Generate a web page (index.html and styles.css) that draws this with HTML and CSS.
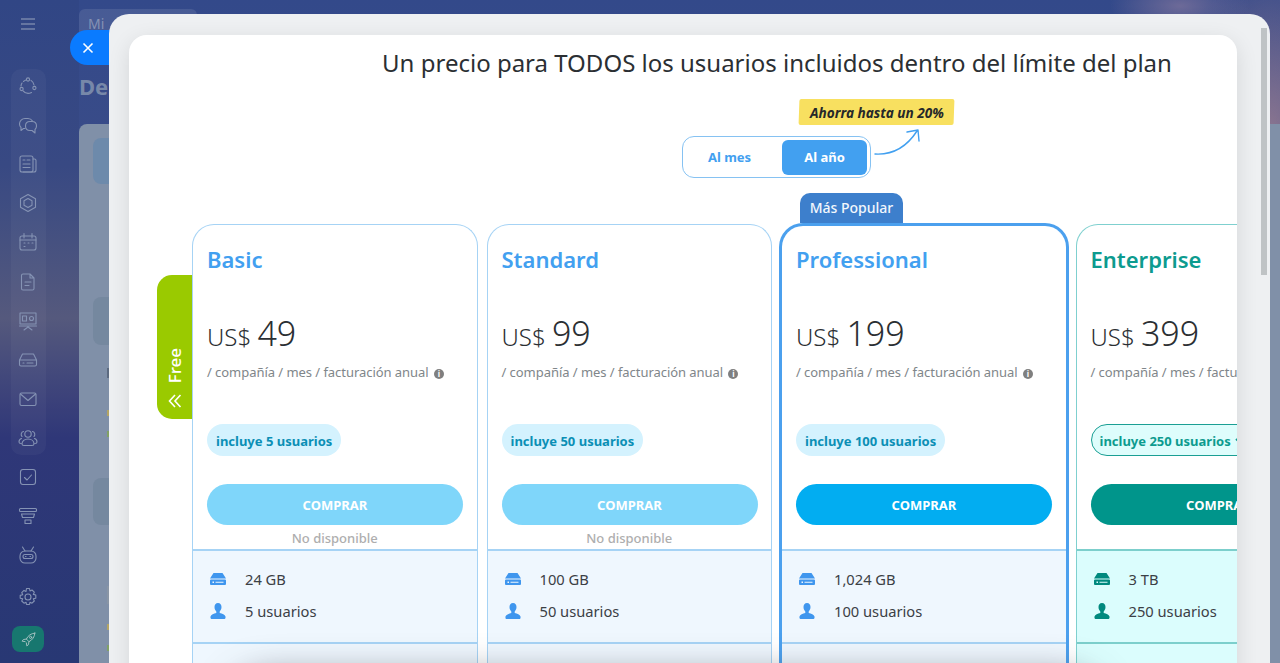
FILE: index.html
```html
<!DOCTYPE html>
<html lang="es">
<head>
<meta charset="utf-8">
<title>Planes</title>
<link rel="stylesheet" href="styles.css">
</head>
<body>
<svg class="defs" width="0" height="0" aria-hidden="true">
  <symbol id="drive" viewBox="0 0 16 12"><path d="M3.500 0h9L16 5.500H0zM1 6.500h14a1 1 0 0 1 1 1V11a1 1 0 0 1-1 1H1a1 1 0 0 1-1-1V7.500a1 1 0 0 1 1-1zM2.500 8.500v1.500h1.500V8.500zm3 .2v1h8v-1z" fill-rule="evenodd"/></symbol>
  <symbol id="user" viewBox="0 0 16 16"><path d="M8 0c2.300 0 3.500 1.700 3.500 4 0 2-.8 3.500-1.800 4.400v1.600c2.500.7 5.300 1.600 5.800 3.500.2.800 0 2.500-1 2.500H1.500c-1 0-1.200-1.700-1-2.500.5-1.900 3.300-2.800 5.800-3.500V8.400C5.300 7.500 4.500 6 4.500 4 4.500 1.700 5.700 0 8 0z"/></symbol>
</svg>
<aside class="sidebar">
  <button class="burger"><svg width="16" height="12" viewBox="0 0 16 12"><path d="M1 1h14M1 6h14M1 11h14"/></svg></button>
  <div class="side-group">
    <span class="side-icon"><svg viewBox="0 0 20 20"><circle cx="10" cy="3.500" r="1.600"/><circle cx="3.600" cy="13" r="1.600"/><circle cx="16.400" cy="12" r="1.600"/><path d="M5.500 5.500A7.500 7.500 0 0 1 8 4M13 4.400a7 7 0 0 1 3 4.600M5 14.800a7 7 0 0 0 8.500 1.700M3 10a7 7 0 0 1 1-3"/></svg></span>
    <span class="side-icon"><svg viewBox="0 0 20 20"><path d="M7 13.500H5.500L3 15.500v-3A5 5 0 0 1 1.500 9c0-3 2.500-5.500 5.500-5.500h3c2 0 3.500 1 4.500 2.500"/><path d="M12 6.500h2c2.700 0 4.500 2 4.500 4.500 0 1.500-.5 2.500-1.500 3.500V18l-3-2.500h-2c-2.700 0-4.500-2-4.500-4.500s1.800-4.500 4.500-4.500z"/></svg></span>
    <span class="side-icon"><svg viewBox="0 0 20 20"><rect x="2" y="2" width="13" height="16" rx="2"/><path d="M15 5h1.500A1.500 1.500 0 0 1 18 6.500V16a2 2 0 0 1-2 2H5M5 6h2M9 6h3M5 10h7M5 13.500h7"/></svg></span>
    <span class="side-icon"><svg viewBox="0 0 20 20"><path d="M10 1.500l7.500 4.300v8.400L10 18.500l-7.500-4.300V5.800z"/><path d="M10 5.500l4 2.300v4.400l-4 2.300-4-2.300V7.800z"/></svg></span>
    <span class="side-icon"><svg viewBox="0 0 20 20"><rect x="2" y="4" width="16" height="14" rx="2"/><path d="M6 1.500V6M14 1.500V6M2 8h16M6 11h1M10 11h1M14 11h1M6 14.500h1"/></svg></span>
    <span class="side-icon"><svg viewBox="0 0 20 20"><path d="M5 2h7l4 4v10.500a1.500 1.500 0 0 1-1.500 1.500h-9.500a1.500 1.500 0 0 1-1.500-1.500V3.500A1.500 1.500 0 0 1 5 2zM12 2v4h4M7 10h6M7 13.500h4"/></svg></span>
    <span class="side-icon"><svg viewBox="0 0 20 20"><path d="M2 2h16v11H2zM1.500 15h17M10 15v1M6 19l4-3 4 3"/><rect x="4.500" y="5" width="4" height="5"/><circle cx="13.500" cy="7.500" r="2"/></svg></span>
    <span class="side-icon"><svg viewBox="0 0 20 20"><path d="M4.500 4h11l3 6v4.500a1.500 1.500 0 0 1-1.500 1.500H3a1.500 1.500 0 0 1-1.500-1.500V10zM1.500 10h17M5 13h1M9 13h6"/></svg></span>
    <span class="side-icon"><svg viewBox="0 0 20 20"><rect x="2" y="4" width="16" height="12.500" rx="1.500"/><path d="M2.500 5l7.500 6.500L17.500 5"/></svg></span>
    <span class="side-icon"><svg viewBox="0 0 20 20"><circle cx="10" cy="6" r="3.200"/><path d="M4 16c0-3 2.500-5 6-5s6 2 6 5c0 1-1 1.500-2 1.500H6c-1 0-2-.5-2-1.500zM5.500 3.500a3 3 0 0 0-1.500 5M14.500 3.500a3 3 0 0 1 1.500 5M3 15.500c-1.500 0-2-.5-2-1.500 0-1.500 1-3 2.500-3.500M17 15.500c1.500 0 2-.5 2-1.500 0-1.500-1-3-2.500-3.500"/></svg></span>
  </div>
  <span class="side-icon"><svg viewBox="0 0 20 20"><rect x="2.500" y="2.500" width="15" height="15" rx="2.500"/><path d="M6.500 10.500l2.500 2.500 4.500-5"/></svg></span>
  <span class="side-icon"><svg viewBox="0 0 20 20"><rect x="1.500" y="2.500" width="17" height="3" rx="1"/><path d="M3.500 8h13l-1 3.500h-11zM7 14h6v3.500H7z"/></svg></span>
  <span class="side-icon"><svg viewBox="0 0 20 20"><rect x="2" y="6" width="16" height="12" rx="5"/><path d="M4.500 2l2.500 4M15.500 2L13 6"/><rect x="5" y="9.500" width="10" height="4" rx="2"/><path d="M7.500 11.500h.5M12 11.500h.5"/></svg></span>
  <span class="side-icon gear"><svg viewBox="0 0 20 20"><circle cx="10" cy="10" r="3"/><path d="M8.500 1.500h3l.5 2.500 2-1 2.300 2.200-1 2.200 2.500.6v3.200l-2.500.6 1 2.200-2.300 2.200-2-1-.5 2.300h-3l-.5-2.300-2 1-2.300-2.200 1-2.200-2.500-.6V8.400l2.500-.6-1-2.200L6 3.400l2 1z"/></svg></span>
  <span class="rocket"><svg viewBox="0 0 20 20"><path d="M17.500 2.500c-4.500.3-8 2.800-10 7l3 3c4.200-2 6.700-5.500 7-10zM7.500 9.500l-3.500.5-1.500 2 3.500.5M10.500 12.500l-.5 3.500-2 1.500-.5-3.500"/><circle cx="12.500" cy="7.500" r="1.300"/></svg></span>
</aside>

<main class="backdrop">
  <div class="crumb">Mi</div>
  <h1 class="page-title">Descripción</h1>
  <section class="board">
    <div class="tile"></div>
    <div class="tile tile-b"></div>
    <div class="tile tile-c"></div>
    <i class="mark m1"></i><i class="mark m2"></i><i class="mark m3"></i><i class="mark m4"></i><i class="mark m5"></i><i class="mark m6"></i>
  </section>
</main>

<button class="close" aria-label="Cerrar"><svg width="12" height="12" viewBox="0 0 12 12"><path d="M1.500 1.500l9 9M10.500 1.500l-9 9"/></svg></button>

<div class="slider">
  <div class="scrollbar"></div>
  <div class="sheet">
    <div class="pricing">
      <h2 class="headline">Un precio para TODOS los usuarios incluidos dentro del límite del plan</h2>
      <div class="period">
        <div class="toggle">
          <span class="toggle-opt">Al mes</span>
          <span class="toggle-opt is-on">Al año</span>
          <div class="promo"><span class="promo-label">Ahorra hasta un 20%</span></div>
          <svg class="promo-arrow" width="50" height="32" viewBox="0 0 50 32"><path d="M1 27c17 1 31-6 42-23M33 5l11-2 1 11"/></svg>
        </div>
      </div>
      <div class="cards">
        <a class="free-tab"><span class="free-label">Free</span><svg width="14" height="14" viewBox="0 0 14 14"><path d="M7 1L1.500 7 7 13M12.500 1L7 7l5.500 6"/></svg></a>

        <article class="card">
          <h3 class="plan">Basic</h3>
          <p class="price"><span class="cur">US$ </span>49</p>
          <p class="terms">/ compañía / mes / facturación anual <span class="info">i</span></p>
          <span class="seats">incluye 5 usuarios</span>
          <button class="buy">COMPRAR</button>
          <p class="note">No disponible</p>
          <div class="feat">
            <div class="feat-row"><svg class="ic"><use href="#drive"/></svg>24 GB</div>
            <div class="feat-row"><svg class="ic"><use href="#user"/></svg>5 usuarios</div>
          </div>
          <div class="feat feat-more"></div>
        </article>

        <article class="card">
          <h3 class="plan">Standard</h3>
          <p class="price"><span class="cur">US$ </span>99</p>
          <p class="terms">/ compañía / mes / facturación anual <span class="info">i</span></p>
          <span class="seats">incluye 50 usuarios</span>
          <button class="buy">COMPRAR</button>
          <p class="note">No disponible</p>
          <div class="feat">
            <div class="feat-row"><svg class="ic"><use href="#drive"/></svg>100 GB</div>
            <div class="feat-row"><svg class="ic"><use href="#user"/></svg>50 usuarios</div>
          </div>
          <div class="feat feat-more"></div>
        </article>

        <article class="card card-pro">
          <span class="pop">Más Popular</span>
          <h3 class="plan">Professional</h3>
          <p class="price"><span class="cur">US$ </span>199</p>
          <p class="terms">/ compañía / mes / facturación anual <span class="info">i</span></p>
          <span class="seats">incluye 100 usuarios</span>
          <button class="buy">COMPRAR</button>
          <p class="note"></p>
          <div class="feat">
            <div class="feat-row"><svg class="ic"><use href="#drive"/></svg>1,024 GB</div>
            <div class="feat-row"><svg class="ic"><use href="#user"/></svg>100 usuarios</div>
          </div>
          <div class="feat feat-more"></div>
        </article>

        <article class="card card-ent">
          <h3 class="plan">Enterprise</h3>
          <p class="price"><span class="cur">US$ </span>399</p>
          <p class="terms">/ compañía / mes / facturación anual <span class="info">i</span></p>
          <span class="seats">incluye 250 usuarios <svg class="chev" width="10" height="7" viewBox="0 0 10 7"><path d="M1 1l4 4 4-4"/></svg></span>
          <button class="buy">COMPRAR</button>
          <p class="note"></p>
          <div class="feat">
            <div class="feat-row"><svg class="ic"><use href="#drive"/></svg>3 TB</div>
            <div class="feat-row"><svg class="ic"><use href="#user"/></svg>250 usuarios</div>
          </div>
          <div class="feat feat-more"></div>
        </article>
      </div>
    </div>
    <div class="sheet-fade"></div>
  </div>
</div>
</body>
</html>
```

FILE: styles.css
```css
* { box-sizing: border-box; }
html, body { height: 100%; }
body {
  margin: 0;
  height: 663px;
  overflow: hidden;
  display: flex;
  font-family: "Noto Sans", "Open Sans", sans-serif;
  color: #2b2f33;
  background:
    radial-gradient(ellipse 70px 30px at 1180px 6px, #6d6a98 0%, rgba(109,106,152,0) 100%),
    radial-gradient(ellipse 90px 170px at 1270px 130px, #8a7590 0%, rgba(138,117,144,0) 100%),
    radial-gradient(ellipse 40px 110px at 1280px 340px, #806a88 0%, rgba(128,106,136,0) 100%),
    radial-gradient(ellipse 20px 50px at 1278px 480px, #7a8aa8 0%, rgba(122,138,168,0) 100%),
    linear-gradient(180deg, #33498a 0%, #3a4c88 25%, #585c82 48%, #31397c 66%, #2a3a78 100%);
}
.defs { position: absolute; }
.sidebar {
  width: 79px;
  flex: none;
  display: flex;
  flex-direction: column;
  align-items: center;
  padding-right: 23px;
  background: rgba(0, 0, 0, .03);
}
.burger {
  border: 0;
  background: none;
  padding: 0;
  margin: 18px 0 39px;
  height: 12px;
  display: block;
}
.burger svg { display: block; fill: none; stroke: #7785ab; stroke-width: 1.300; }
.side-group {
  width: 35px;
  height: 386px;
  margin-bottom: 2.500px;
  background: rgba(255, 255, 255, .035);
  border-radius: 10px;
  display: flex;
  flex-direction: column;
  align-items: center;
  justify-content: center;
}
.side-icon {
  width: 39px;
  height: 39.100px;
  display: flex;
  align-items: center;
  justify-content: center;
  flex: none;
}
.side-icon svg, .rocket svg {
  width: 20px;
  height: 20px;
  fill: none;
  stroke: #8593b4;
  stroke-width: 1.100;
  stroke-linejoin: round;
  stroke-linecap: round;
}
.gear { margin-top: 3px; }
.rocket {
  width: 32px;
  height: 26px;
  margin-top: 9.500px;
  border-radius: 8px;
  background: #17776f;
  display: flex;
  align-items: center;
  justify-content: center;
}
.rocket svg { width: 17px; height: 17px; stroke: #a8c3c3; }

.backdrop { flex: 1; min-width: 0; position: relative; }
.crumb {
  width: 118px;
  height: 41px;
  margin-top: 9px;
  padding: 5px 9px;
  border-radius: 6px;
  background: rgba(255, 255, 255, .1);
  color: #8592b4;
  font-size: 14px;
}
.page-title {
  margin: 21px 0 0;
  color: #7788a9;
  font-size: 22px;
  line-height: 30px;
  font-weight: 700;
}
.board {
  position: relative;
  height: 540px;
  margin-top: 23px;
  padding: 14px;
  border-radius: 8px 0 0 0;
  background: #8090a8;
}
.tile { height: 46px; border-radius: 8px; background: #6d8aab; }
.tile-b { margin-top: 113px; height: 48px; background: #75889f; }
.tile-c { margin-top: 133px; height: 47px; background: #75889f; }
.mark { position: absolute; left: 28px; width: 3px; height: 6px; background: #5c6a80; }
.m1 { top: 244px; height: 10px; }
.m2 { top: 286px; background: #b3a464; }
.m3 { top: 307px; background: #80a066; }
.m4 { top: 462px; height: 18px; background: #8995a5; }
.m5 { top: 500px; background: #b3a464; }
.m6 { top: 521px; background: #80a066; }

.close {
  position: absolute;
  left: 70px;
  top: 30px;
  width: 44px;
  height: 35px;
  padding: 0 8px 0 0;
  border: 0;
  border-radius: 18px 0 0 18px;
  background: #0a7bff;
  display: flex;
  align-items: center;
  justify-content: center;
}
.close svg { fill: none; stroke: #fff; stroke-width: 1.600; }

.slider {
  position: absolute;
  left: 109px;
  right: 10px;
  top: 14px;
  bottom: -40px;
  padding: 21px 33px 0 20px;
  border-radius: 20px 20px 0 0;
  background: #eef0f2;
}
.scrollbar {
  position: absolute;
  right: 3px;
  top: 14px;
  width: 6px;
  height: 247px;
  background: #bfc3c5;
}
.sheet {
  position: relative;
  height: 100%;
  border-radius: 18px 18px 0 0;
  background: #fff;
  overflow: hidden;
}
.slider::before {
  content: "";
  position: absolute;
  left: 20px;
  right: 33px;
  top: 21px;
  bottom: 0;
  border-radius: 18px 18px 0 0;
  box-shadow: 0 6px 22px rgba(0, 0, 0, .11);
}
.pricing { width: 1170px; margin-left: 63px; padding-top: 11px; }
.headline {
  margin: 0;
  text-align: center;
  font-size: 24px;
  line-height: 34px;
  font-weight: 400;
  color: #2b2f33;
}
.period { display: flex; justify-content: center; padding-top: 56px; }
.toggle {
  position: relative;
  width: 189px;
  height: 42px;
  left: -1px;
  padding: 2.500px;
  display: flex;
  justify-content: flex-end;
  align-items: stretch;
  border: 1.500px solid #86c2f2;
  border-radius: 12px;
}
.toggle-opt {
  width: 85px;
  display: flex;
  align-items: center;
  justify-content: center;
  font-size: 13px;
  font-weight: 700;
  color: #42a0f0;
  border-radius: 6px;
}
.toggle-opt:first-child { margin-right: 10px; }
.toggle-opt.is-on { background: #42a0f0; color: #fff; }
.promo {
  position: absolute;
  left: 116px;
  top: -38px;
  width: 155px;
  height: 26px;
  background: #f8e060;
  transform: skewX(-2deg);
  border-radius: 2px;
  display: flex;
  align-items: center;
  justify-content: center;
}
.promo-label {
  font-size: 13.600px;
  font-style: italic;
  font-weight: 700;
  color: #26282a;
  transform: skewX(2deg);
}
.promo-arrow {
  position: absolute;
  left: 191px;
  top: -10px;
  fill: none;
  stroke: #42a0f0;
  stroke-width: 1.400;
  stroke-linecap: round;
  stroke-linejoin: round;
}
.cards {
  position: relative;
  display: flex;
  align-items: flex-start;
  gap: 9px;
  margin-top: 46px;
}
.free-tab {
  position: absolute;
  left: -35px;
  top: 51px;
  width: 35px;
  height: 144px;
  border-radius: 15px 0 0 15px;
  background: #9aca00;
  display: flex;
  flex-direction: column;
  align-items: center;
  justify-content: flex-end;
  gap: 11px;
  padding-bottom: 11px;
  color: #fff;
}
.free-label {
  writing-mode: vertical-rl;
  transform: rotate(180deg);
  font-size: 17px;
  font-weight: 500;
  line-height: 18px;
}
.free-tab svg { fill: none; stroke: #fff; stroke-width: 1.600; }
.card {
  position: relative;
  flex: none;
  width: 285.500px;
  height: 520px;
  padding: 0 14px;
  border: 1px solid #a6d3f5;
  border-bottom: 0;
  border-radius: 22px 22px 0 0;
  background: #fff;
}
.plan {
  margin: 19px 0 0;
  font-size: 22px;
  line-height: 30px;
  font-weight: 600;
  color: #42a0f0;
}
.price {
  margin: 37px 0 0;
  font-size: 34px;
  line-height: 44px;
  font-weight: 300;
  color: #2b2f33;
}
.cur { font-size: 24px; }
.terms {
  margin: 3px 0 0;
  font-size: 13px;
  line-height: 20px;
  letter-spacing: -.05px;
  color: #80868a;
  white-space: nowrap;
}
.info {
  display: inline-flex;
  align-items: center;
  justify-content: center;
  width: 10px;
  height: 10px;
  margin-left: 2px;
  border-radius: 50%;
  background: #7f7f7f;
  color: #fff;
  font-size: 8px;
  font-weight: 700;
  line-height: 1;
  vertical-align: 0;
}
.seats {
  display: block;
  width: fit-content;
  height: 32px;
  margin-top: 42px;
  padding: 0 9px;
  border-radius: 16px;
  background: #d4f2fe;
  color: #0b8fb5;
  font-size: 13px;
  font-weight: 700;
  line-height: 34px;
  white-space: nowrap;
}
.buy {
  display: block;
  width: 256px;
  height: 41px;
  margin-top: 28px;
  border: 0;
  border-radius: 21px;
  background: #7fd6fa;
  color: #fff;
  font: 700 13px "Noto Sans", "Open Sans", sans-serif;
}
.note {
  height: 20px;
  margin: 3px 0 0;
  text-align: center;
  font-size: 13px;
  line-height: 20px;
  font-weight: 500;
  color: #aeaeae;
}
.feat {
  height: 93px;
  margin: 1px -14px 0;
  padding-top: 12px;
  border-top: 2px solid #a6d3f5;
  background: #eff7fe;
}
.feat-more { margin-top: 0; height: 200px; }
.feat-row {
  display: flex;
  align-items: center;
  height: 32px;
  padding-left: 17px;
  font-size: 14.700px;
  color: #3b4045;
}
.ic { width: 16px; height: 16px; margin-right: 19px; fill: #3f96ee; flex: none; }
.card-pro {
  margin: -1px -2px 0;
  width: 289.500px;
  border: 3px solid #4ba0ee;
  border-bottom: 0;
  border-radius: 24px 24px 0 0;
}
.card-pro .plan { margin-top: 18px; }
.card-pro .buy { background: #02adf1; }
.pop {
  position: absolute;
  left: 18px;
  top: -33px;
  width: 103px;
  height: 30px;
  border-radius: 10px 10px 0 0;
  background: #3d7fcc;
  color: #f2f7fc;
  font-size: 14px;
  font-weight: 500;
  line-height: 30px;
  text-align: center;
}
.card-ent { border-color: #7fd0cf; }
.card-ent .plan { color: #0d9b8f; }
.card-ent .seats {
  border: 1px solid #1a9f94;
  background: #defdfc;
  color: #0d9b8f;
  padding: 0 8px;
  line-height: 32px;
}
.chev { fill: none; stroke: #0d9b8f; stroke-width: 1.800; margin-left: 1px; vertical-align: 1px; }
.card-ent .buy { background: #00958b; }
.card-ent .feat { border-top-color: #7ccfcc; background: #dbfdfd; }
.card-ent .ic { fill: #00897e; }
.sheet-fade {
  position: absolute;
  left: 110px;
  right: 145px;
  top: 650px;
  height: 60px;
  border-radius: 30px;
  background: rgba(70, 75, 85, .7);
  box-shadow: 0 0 36px 8px rgba(70, 75, 85, .7);
}
```
